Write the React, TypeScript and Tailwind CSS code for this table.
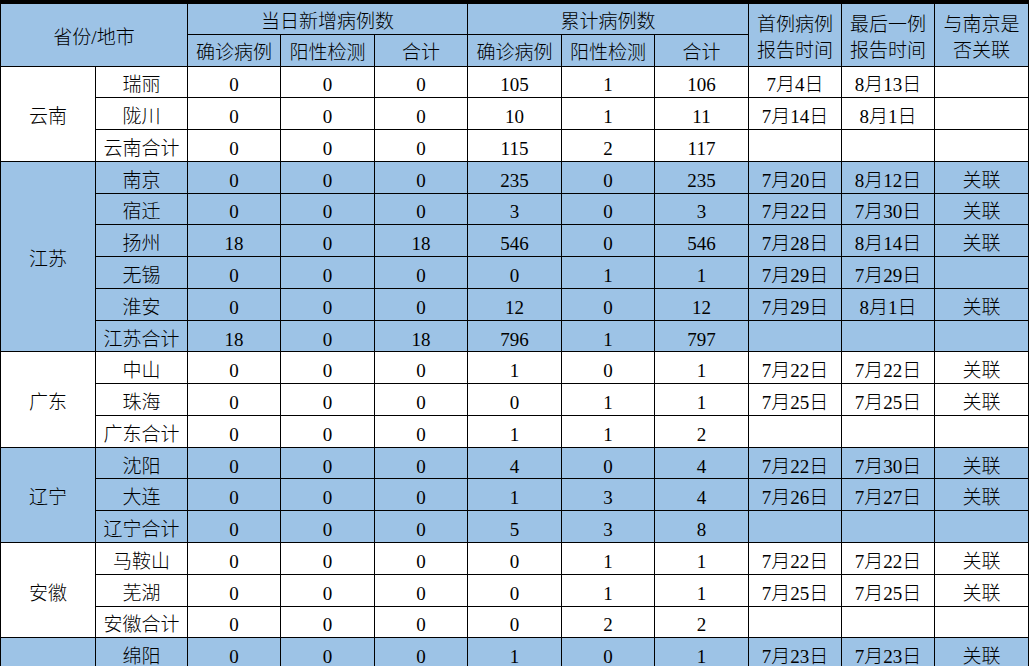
import React from "react";

type Row = {
  city: string;
  v: (string | number)[];
  first?: string;
  last?: string;
  link?: string;
};

type Group = {
  province: string;
  blue: boolean;
  rows: Row[];
};

const groups: Group[] = [
  {
    province: "云南",
    blue: false,
    rows: [
      { city: "瑞丽", v: [0, 0, 0, 105, 1, 106], first: "7月4日", last: "8月13日" },
      { city: "陇川", v: [0, 0, 0, 10, 1, 11], first: "7月14日", last: "8月1日" },
      { city: "云南合计", v: [0, 0, 0, 115, 2, 117] },
    ],
  },
  {
    province: "江苏",
    blue: true,
    rows: [
      { city: "南京", v: [0, 0, 0, 235, 0, 235], first: "7月20日", last: "8月12日", link: "关联" },
      { city: "宿迁", v: [0, 0, 0, 3, 0, 3], first: "7月22日", last: "7月30日", link: "关联" },
      { city: "扬州", v: [18, 0, 18, 546, 0, 546], first: "7月28日", last: "8月14日", link: "关联" },
      { city: "无锡", v: [0, 0, 0, 0, 1, 1], first: "7月29日", last: "7月29日" },
      { city: "淮安", v: [0, 0, 0, 12, 0, 12], first: "7月29日", last: "8月1日", link: "关联" },
      { city: "江苏合计", v: [18, 0, 18, 796, 1, 797] },
    ],
  },
  {
    province: "广东",
    blue: false,
    rows: [
      { city: "中山", v: [0, 0, 0, 1, 0, 1], first: "7月22日", last: "7月22日", link: "关联" },
      { city: "珠海", v: [0, 0, 0, 0, 1, 1], first: "7月25日", last: "7月25日", link: "关联" },
      { city: "广东合计", v: [0, 0, 0, 1, 1, 2] },
    ],
  },
  {
    province: "辽宁",
    blue: true,
    rows: [
      { city: "沈阳", v: [0, 0, 0, 4, 0, 4], first: "7月22日", last: "7月30日", link: "关联" },
      { city: "大连", v: [0, 0, 0, 1, 3, 4], first: "7月26日", last: "7月27日", link: "关联" },
      { city: "辽宁合计", v: [0, 0, 0, 5, 3, 8] },
    ],
  },
  {
    province: "安徽",
    blue: false,
    rows: [
      { city: "马鞍山", v: [0, 0, 0, 0, 1, 1], first: "7月22日", last: "7月22日", link: "关联" },
      { city: "芜湖", v: [0, 0, 0, 0, 1, 1], first: "7月25日", last: "7月25日", link: "关联" },
      { city: "安徽合计", v: [0, 0, 0, 0, 2, 2] },
    ],
  },
  {
    province: "",
    blue: true,
    rows: [
      { city: "绵阳", v: [0, 0, 0, 1, 0, 1], first: "7月23日", last: "7月23日", link: "关联" },
    ],
  },
];

const colWidths = [95, 92, 93, 94, 93, 94, 93, 94, 93, 93, 94];

const td = "border border-black text-center align-middle px-0 pt-[6px] pb-0 leading-none whitespace-nowrap";
const th = "border border-black text-center align-middle px-0 pt-[5px] pb-0 font-light leading-[19px] whitespace-nowrap";
const th2 = "border border-black border-t-4 text-center align-middle px-0 pt-[6px] pb-0 font-light leading-[26px]";

export default function App() {
  return (
    <div
      className="w-[1029px] h-[666px] overflow-hidden bg-white text-black text-[19px] font-light"
      style={{ fontFamily: '"Liberation Serif", "Noto Sans CJK SC", serif' }}
    >
      <table className="table-fixed border-collapse w-[1029px]">
        <colgroup>
          {colWidths.map((w, i) => (
            <col key={i} style={{ width: w }} />
          ))}
        </colgroup>
        <thead className="bg-[#9dc3e6]">
          <tr className="h-[32px]">
            <th rowSpan={2} colSpan={2} className={`${th} border-t-4`}>
              省份/地市
            </th>
            <th colSpan={3} className={`${th} border-t-4`}>
              当日新增病例数
            </th>
            <th colSpan={3} className={`${th} border-t-4`}>
              累计病例数
            </th>
            <th rowSpan={2} className={th2}>
              首例病例
              <br />
              报告时间
            </th>
            <th rowSpan={2} className={th2}>
              最后一例
              <br />
              报告时间
            </th>
            <th rowSpan={2} className={th2}>
              与南京是
              <br />
              否关联
            </th>
          </tr>
          <tr className="h-[32px]">
            <th className={th}>确诊病例</th>
            <th className={th}>阳性检测</th>
            <th className={th}>合计</th>
            <th className={th}>确诊病例</th>
            <th className={th}>阳性检测</th>
            <th className={th}>合计</th>
          </tr>
        </thead>
        <tbody>
          {groups.map((g) =>
            g.rows.map((r, i) => (
              <tr key={g.province + r.city} className={`h-[31.78px] ${g.blue ? "bg-[#9dc3e6]" : "bg-white"}`}>
                {i === 0 && (
                  <td rowSpan={g.rows.length} className={td}>
                    {g.province}
                  </td>
                )}
                <td className={td}>{r.city}</td>
                {r.v.map((n, j) => (
                  <td key={j} className={td}>
                    {n}
                  </td>
                ))}
                <td className={td}>{r.first ?? ""}</td>
                <td className={td}>{r.last ?? ""}</td>
                <td className={td}>{r.link ?? ""}</td>
              </tr>
            ))
          )}
        </tbody>
      </table>
    </div>
  );
}
